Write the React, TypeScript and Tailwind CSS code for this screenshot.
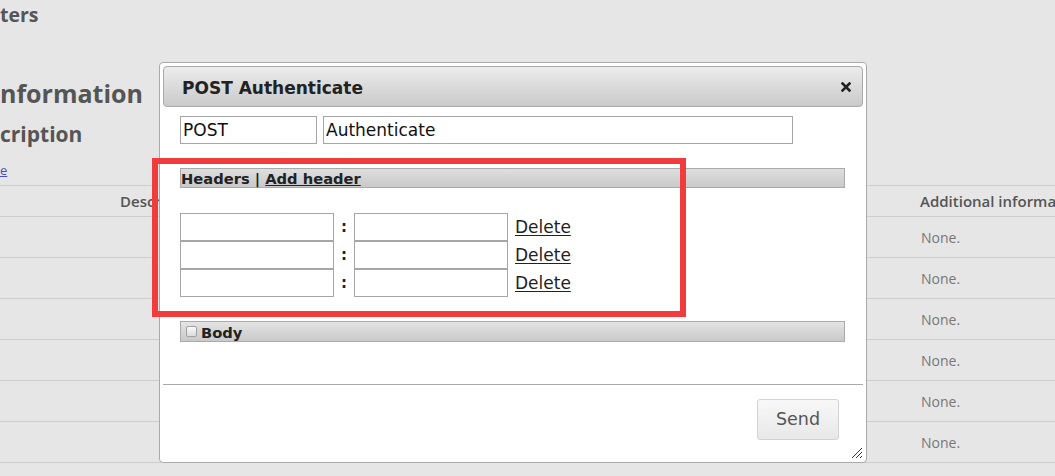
import React from "react";

const dejavu = { fontFamily: '"DejaVu Sans", Verdana, sans-serif' };

function HeaderRow() {
  return (
    <div className="flex items-center h-[28px]">
      <div className="w-[154px] h-[28px] border border-[#a6a6a6] bg-white" />
      <div className="w-[20px] text-center text-[15px] font-bold leading-[28px] text-[#222]">:</div>
      <div className="w-[154px] h-[28px] border border-[#a6a6a6] bg-white" />
      <span className="ml-[7px] text-[17px] leading-[28px] text-[#222] underline underline-offset-[2px]">Delete</span>
    </div>
  );
}

export default function App() {
  const rows = [0, 1, 2, 3, 4, 5];
  return (
    <div
      className="relative w-[1055px] h-[476px] overflow-hidden bg-[#e6e6e6]"
      style={{ fontFamily: '"Open Sans", sans-serif' }}
    >
      <div className="pt-[3px]">
        <div className="text-[19.5px] font-bold leading-[24px] text-[#555]">ters</div>
        <div className="mt-[51px] text-[25px] font-bold leading-[30px] text-[#555]">nformation</div>
        <div className="mt-[13px] text-[21px] font-bold leading-[26px] text-[#555]">cription</div>
        <div className="mt-[14px] text-[13px] leading-[18px]">
          <span className="text-[#4b4bd6] underline">e</span>
        </div>
        <div className="mt-[6px] w-[1200px]">
          <div className="flex items-center h-[32px] border-y border-[#cdcdcd] text-[15px] font-semibold text-[#555]">
            <div className="w-[920px] shrink-0 pl-[120px]">Description</div>
            <div className="whitespace-nowrap shrink-0">Additional information</div>
          </div>
          {rows.map((r) => (
            <div key={r} className="flex items-center h-[41px] border-b border-[#cdcdcd] text-[14px] text-[#777]">
              <div className="w-[921px] shrink-0" />
              <div>None.</div>
            </div>
          ))}
        </div>
      </div>

      {/* Dialog */}
      <div
        className="absolute left-[159px] top-[62px] w-[708px] h-[401px] border border-[#aaaaaa] rounded-[4px] bg-white p-[3px] flex flex-col"
        style={dejavu}
      >
        <div className="h-[41px] shrink-0 border border-[#aaaaaa] rounded-[4px] bg-gradient-to-b from-[#ececec] to-[#cacaca] flex items-center justify-between pl-[18px] pr-[11px]">
          <span className="text-[17px] font-bold text-[#222] leading-[20px] mt-[2px]">POST Authenticate</span>
          <svg width="10" height="10" viewBox="0 0 10 10">
            <path d="M1.5 1.5 L8.5 8.5 M8.5 1.5 L1.5 8.5" stroke="#222" strokeWidth="2.6" strokeLinecap="square" />
          </svg>
        </div>

        <div className="pl-[17px]">
          <div className="mt-[9px] flex">
            <div className="w-[137px] h-[28px] border border-[#a6a6a6] pl-[2px] text-[17px] leading-[27px] text-[#111]">POST</div>
            <div className="ml-[6px] w-[470px] h-[28px] border border-[#a6a6a6] pl-[2px] text-[17px] leading-[27px] text-[#111]">Authenticate</div>
          </div>

          <div className="mt-[24px] w-[665px] h-[20px] border border-[#aaaaaa] bg-gradient-to-b from-[#dedede] to-[#c9c9c9] text-[14.7px] font-bold leading-[19px] text-[#222] whitespace-nowrap">
            Headers | <span className="underline">Add header</span>
          </div>

          <div className="mt-[25px] flex flex-col">
            <HeaderRow />
            <HeaderRow />
            <HeaderRow />
          </div>

          <div className="mt-[24px] w-[665px] h-[21px] border border-[#aaaaaa] bg-gradient-to-b from-[#e4e4e4] to-[#c9c9c9] flex items-center whitespace-nowrap">
            <div className="ml-[5px] w-[11px] h-[11px] border border-[#a0a0a0] rounded-[2px] bg-gradient-to-b from-[#fafafa] to-[#dcdcdc]" />
            <span className="ml-[4px] text-[14.7px] font-bold leading-[19px] text-[#222] mt-[2px]">Body</span>
          </div>
        </div>

        <div className="mt-[42px] h-px bg-[#aaaaaa]" />

        <div className="flex justify-end pr-[24px] mt-[14px]">
          <div className="w-[82px] h-[41px] border border-[#d3d3d3] rounded-[3px] bg-gradient-to-b from-[#f8f8f8] to-[#e8e8e8] flex items-center justify-center text-[17.5px] text-[#555]">
            Send
          </div>
        </div>

        <svg className="absolute right-[3px] bottom-[3px]" width="12" height="12" viewBox="0 0 12 12">
          <path d="M11 1 L1 11 M11 5 L5 11 M11 9 L9 11" stroke="#333" strokeWidth="1" />
        </svg>
      </div>

      {/* Red annotation rectangle */}
      <div className="absolute left-[152px] top-[158px] w-[534px] h-[159px] border-[6px] border-[#f03c3c]" />
    </div>
  );
}
